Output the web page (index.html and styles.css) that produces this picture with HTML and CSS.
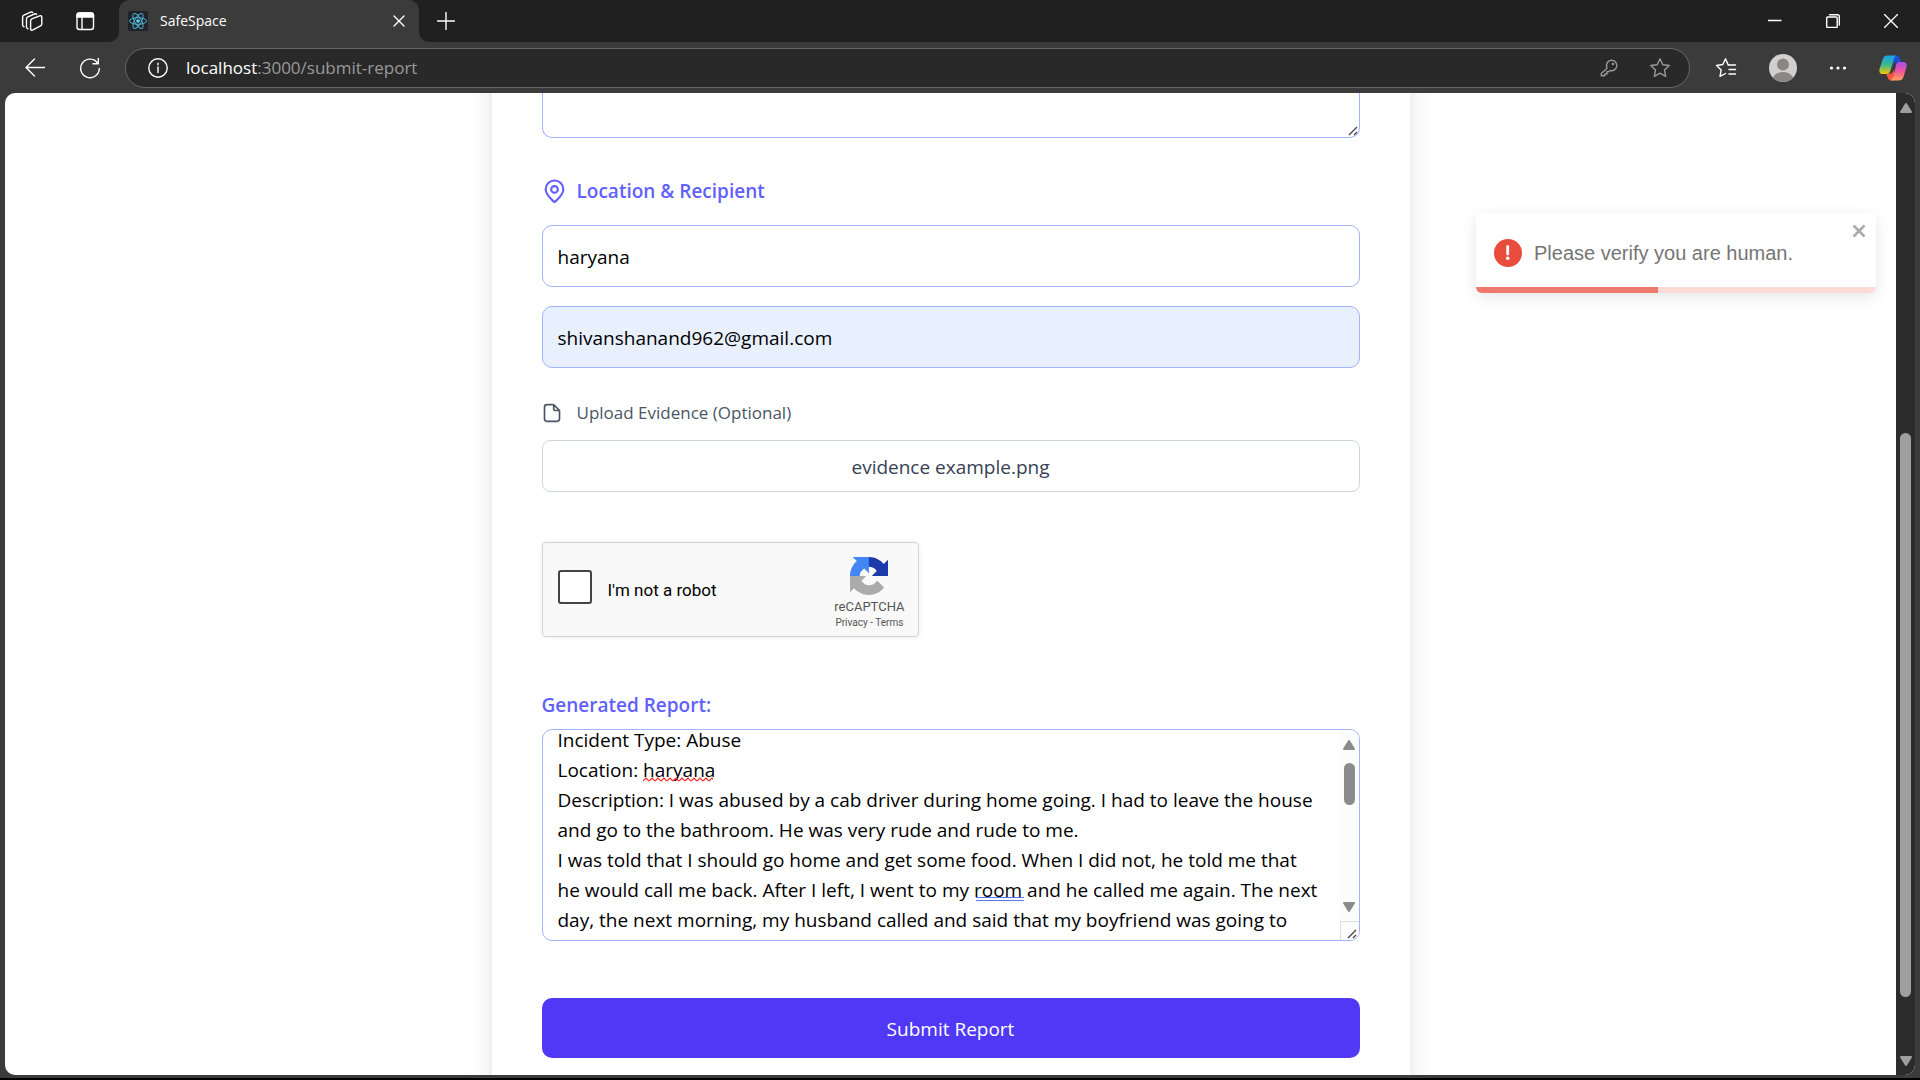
FILE: index.html
```html
<!DOCTYPE html>
<html lang="en">
<head>
<meta charset="utf-8">
<title>SafeSpace</title>
<link rel="stylesheet" href="styles.css">
</head>
<body>
<header class="browser">
  <div class="tabstrip">
    <div class="tab-tools">
      <button class="icon-btn" aria-label="Workspaces"><svg width="22" height="22" viewBox="0 0 22 22" class="line"><path d="M1.600 15.500 V7.200 Q1.600 5.800 3 5.200 L9.500 2.200 Q11 1.700 11.600 2.500 M5.500 17.500 V8.800 Q5.500 7.400 6.900 6.800 L13.500 4 Q15 3.500 15.600 4.500 M1.600 15.500 Q2 16.400 3 16.800 M5.500 17.500 Q6 18.500 7 18.900 M9.600 10.800 Q9.600 9.500 10.900 8.900 L18.600 5.900 Q20.800 5.200 20.800 7.200 V13.700 Q20.800 15.200 19.500 15.900 L12 19.900 Q9.600 20.900 9.600 18.500 Z"/></svg></button>
      <button class="icon-btn" aria-label="Tab actions"><svg width="20" height="20" viewBox="0 0 20 20" class="line"><rect x="2" y="2" width="16.500" height="16.500" rx="2.500"/><path d="M7 6V18"/><path d="M2 6V4.500Q2 2 4.500 2H16Q18.500 2 18.500 4.500V6Z" fill="#fff"/></svg></button>
    </div>
    <div class="tab">
      <svg width="20" height="20" viewBox="0 0 20 20"><rect width="20" height="20" rx="2" fill="#20232a"/><g fill="none" stroke="#4fb3cf" stroke-width="1"><ellipse cx="10" cy="10" rx="8.500" ry="3.300"/><ellipse cx="10" cy="10" rx="8.500" ry="3.300" transform="rotate(60 10 10)"/><ellipse cx="10" cy="10" rx="8.500" ry="3.300" transform="rotate(120 10 10)"/></g><circle cx="10" cy="10" r="1.800" fill="#61dafb"/></svg>
      <span class="tab-title">SafeSpace</span>
      <button class="icon-btn" aria-label="Close tab"><svg width="12" height="12" viewBox="0 0 12 12" class="line"><path d="M1 1 11 11M11 1 1 11"/></svg></button>
    </div>
    <button class="icon-btn new-tab" aria-label="New tab"><svg width="18" height="18" viewBox="0 0 18 18" class="line"><path d="M9 .5V17.500M.5 9H17.500"/></svg></button>
    <div class="window-controls">
      <button class="icon-btn" aria-label="Minimize"><svg width="14" height="14" viewBox="0 0 14 14" class="line"><path d="M0 6.500H13"/></svg></button>
      <button class="icon-btn" aria-label="Restore"><svg width="14" height="14" viewBox="0 0 14 14" class="line"><rect x=".7" y="3" width="10.500" height="10.500" rx="1"/><path d="M3.500.8H11.500Q13.300.8 13.300 2.600V11"/></svg></button>
      <button class="icon-btn" aria-label="Close"><svg width="14" height="14" viewBox="0 0 14 14" class="line"><path d="M.5.5 13.500 13.500M13.500.5.5 13.500"/></svg></button>
    </div>
  </div>
  <div class="toolbar">
    <button class="icon-btn" aria-label="Back"><svg width="20" height="20" viewBox="0 0 20 20" class="line"><path d="M20 9.500H1M9.500 1 1 9.500 9.500 18"/></svg></button>
    <button class="icon-btn reload" aria-label="Reload"><svg width="22" height="22" viewBox="0 0 22 22" class="line"><path d="M18.900 6.500A9.300 9.300 0 1 0 20.300 11.500M19.300 1.500V6.800H14"/></svg></button>
    <div class="address">
      <svg width="20" height="20" viewBox="0 0 20 20" class="line"><circle cx="10" cy="10" r="9.200"/><path d="M10 9V14.500M10 5.200V6.800"/></svg>
      <p class="url"><span class="host">localhost</span>:3000/submit-report</p>
      <button class="icon-btn muted" aria-label="Saved password"><svg width="18" height="18" viewBox="0 0 18 18" class="line"><path d="M6.900 9.400C5.200 4.600 8.200 1.200 11.500 1.200A5.300 5.300 0 0 1 16.800 6.500C16.800 9.800 13.600 12.500 10.200 11.500L8.500 12.800H7V15H5L4.500 16.700H1.300V14.500Z"/><circle cx="13" cy="5" r=".6"/></svg></button>
      <button class="icon-btn muted" aria-label="Add favorite"><svg width="22" height="22" viewBox="0 0 22 22" class="line"><path d="M11 1.800 13.800 7.700 20.200 8.500 15.500 12.900 16.700 19.300 11 16.200 5.300 19.300 6.500 12.900 1.800 8.500 8.200 7.700Z"/></svg></button>
    </div>
    <button class="icon-btn" aria-label="Favorites"><svg width="22" height="22" viewBox="0 0 22 22" class="line"><path d="M14 7.700 13 7.500 10.500 1.800 7.800 7.500 1.500 8.500 6.200 12.900 5 19.300 10.500 16.500M13 8H20.500M14 12.500H20.500M14 17H20.500"/></svg></button>
    <button class="icon-btn" aria-label="Profile"><svg width="28" height="28" viewBox="0 0 28 28"><defs><clipPath id="face"><circle cx="14" cy="14" r="14"/></clipPath></defs><g clip-path="url(#face)"><rect width="28" height="28" fill="#d2d0ce"/><circle cx="14" cy="10.500" r="6" fill="#8a8886"/><ellipse cx="14" cy="26" rx="10.500" ry="8" fill="#8a8886"/></g></svg></button>
    <button class="icon-btn" aria-label="Settings and more"><svg width="18" height="18" viewBox="0 0 18 18" fill="#fff"><circle cx="2.500" cy="9" r="1.600"/><circle cx="9" cy="9" r="1.600"/><circle cx="15.500" cy="9" r="1.600"/></svg></button>
    <button class="icon-btn" aria-label="Copilot"><svg width="28" height="26" viewBox="0 0 28 26"><defs><linearGradient id="c1" x1="0" y1="0" x2="0" y2="1"><stop offset="0" stop-color="#18a0f0"/><stop offset=".5" stop-color="#3cb98a"/><stop offset="1" stop-color="#f6c800"/></linearGradient><linearGradient id="c2" x1="0" y1="0" x2="0" y2="1"><stop offset="0" stop-color="#a94df0"/><stop offset=".5" stop-color="#f0559a"/><stop offset="1" stop-color="#ffa45c"/></linearGradient></defs><path d="M14 .5H17.500Q20 .5 20.700 3L22 7H18Q15 7 14 10L12 15Z" fill="#1b4fd8"/><path d="M7 18.500H13L15 10V19L14 25.500H12Q9.500 25.500 8.500 22Z" fill="#f4573b"/><path d="M8.500.5H18Q15.500 1 14.500 5L11.500 15.500Q10.500 19 7 19H4Q-.5 19 .5 14L4 3.500Q5 .5 8.500 .5Z" fill="url(#c1)"/><path d="M20 7H24Q28.500 7 27.500 12L24.500 22Q23.300 25.500 19.500 25.500H11.500Q13.500 24.500 14.500 21L17 10Q17.500 7 20 7Z" fill="url(#c2)"/><path d="M14.800 8.500H17L14 17H12Z" fill="#3b3b3b"/></svg></button>
  </div>
</header>

<div class="viewport">
  <main class="page">
    <form class="card">
      <div class="description">
        <textarea class="field description-box" aria-label="Description"></textarea>
        <svg class="grip" width="10" height="10" viewBox="0 0 10 10"><path d="M1 9 9 1M6 9 9 6" stroke="#444" stroke-width="1.300"/></svg>
      </div>

      <section class="location">
        <h2 class="heading"><svg width="25" height="25" viewBox="0 0 24 24" fill="none" stroke="currentColor" stroke-width="2"><path d="M20.500 9.800C20.500 15 14.500 20 12.600 21.800Q12 22.300 11.400 21.800C9.500 20 3.500 15 3.500 9.800A8.500 8.300 0 0 1 20.500 9.800Z"/><circle cx="12" cy="10" r="3.200"/></svg>Location &amp; Recipient</h2>
        <input class="field" type="text" aria-label="Location" value="haryana">
        <input class="field autofilled" type="email" aria-label="Recipient email" value="shivanshanand962@gmail.com">
      </section>

      <section class="evidence">
        <label class="evidence-label" for="evidence"><svg width="20" height="20" viewBox="0 0 24 24" fill="none" stroke="currentColor" stroke-width="2" stroke-linejoin="round"><path d="M13 2H6A3 3 0 0 0 3 5V19A3 3 0 0 0 6 22H18A3 3 0 0 0 21 19V9L14 2V6.500Q14 9 16.500 9H21"/></svg>Upload Evidence (Optional)</label>
        <label class="file-drop"><input class="file-input" id="evidence" type="file">evidence example.png</label>
      </section>

      <div class="captcha">
        <input class="captcha-box" type="checkbox" id="robot">
        <label class="captcha-label" for="robot">I'm not a robot</label>
        <div class="captcha-brand">
          <svg width="38" height="38" viewBox="0 0 64 64"><path d="M64 31.955l-.033-1.370V4.687l-7.160 7.160C50.948 4.674 42.033.093 32.050.093c-10.400 0-19.622 4.960-25.458 12.640l11.736 11.860a15.550 15.550 0 0 1 4.754-5.334c2.050-1.600 4.952-2.906 8.968-2.906.485 0 .86.057 1.135.163 4.976.393 9.288 3.140 11.828 7.124l-8.307 8.307L64 31.953" fill="#1c3aa9"/><path d="M31.862.094l-1.370.033H4.594l7.160 7.160C4.580 13.147 0 22.060 0 32.046c0 10.400 4.960 19.622 12.640 25.458L24.500 45.768a15.550 15.550 0 0 1-5.334-4.754c-1.600-2.050-2.906-4.952-2.906-8.968 0-.485.057-.86.163-1.135.393-4.976 3.140-9.288 7.124-11.828l8.307 8.307L31.860.095" fill="#4285f4"/><path d="M.001 32.045l.033 1.370v25.898l7.160-7.160c5.860 7.173 14.774 11.754 24.760 11.754 10.400 0 19.622-4.960 25.458-12.640L45.676 39.407a15.550 15.550 0 0 1-4.754 5.334c-2.050 1.600-4.952 2.906-8.968 2.906-.485 0-.86-.057-1.135-.163-4.976-.393-9.288-3.140-11.828-7.124l8.307-8.307c-10.522.04-22.400.066-27.295-.005" fill="#ababab"/></svg>
          <span class="captcha-name">reCAPTCHA</span>
          <span class="captcha-links"><a href="#privacy">Privacy</a> - <a href="#terms">Terms</a></span>
        </div>
      </div>

      <section class="report">
        <label class="heading" for="report">Generated Report:</label>
        <div class="report-box">
          <textarea class="report-text" id="report" rows="7" spellcheck="false">Incident Type: Abuse
Location: haryana
Description: I was abused by a cab driver during home going. I had to leave the house
and go to the bathroom. He was very rude and rude to me.
I was told that I should go home and get some food. When I did not, he told me that
he would call me back. After I left, I went to my room and he called me again. The next
day, the next morning, my husband called and said that my boyfriend was going to</textarea>
          <svg class="mark mark-spelling" width="70" height="5"><defs><pattern id="wave" width="6" height="5" patternUnits="userSpaceOnUse"><path d="M0 4 3 1 6 4" fill="none" stroke="#f22" stroke-width="1.200"/></pattern></defs><rect width="70" height="5" fill="url(#wave)"/></svg>
          <span class="mark mark-grammar"></span>
          <div class="scroll report-scroll">
            <div class="scroll-track">
              <svg width="12" height="10" viewBox="0 0 12 10"><path d="M6 1 11 9H1Z"/></svg>
              <div class="gap-13"></div><div class="thumb-42"></div><div class="gap-97"></div>
              <svg width="12" height="10" viewBox="0 0 12 10"><path d="M6 9 11 1H1Z"/></svg>
            </div>
            <div class="corner"><svg width="10" height="10" viewBox="0 0 10 10"><path d="M1 9 9 1M6 9 9 6" stroke="#444" stroke-width="1.300"/></svg></div>
          </div>
        </div>
      </section>

      <button class="submit" type="button">Submit Report</button>
    </form>

    <div class="toast" role="alert">
      <div class="toast-body">
        <svg width="28" height="28" viewBox="0 0 28 28"><circle cx="14" cy="14" r="14" fill="#e74c3c"/><path d="M13.700 7.500V15" stroke="#fff" stroke-width="2.800" stroke-linecap="round"/><circle cx="13.700" cy="19.300" r="1.800" fill="#fff"/></svg>
        <span class="toast-text">Please verify you are human.</span>
      </div>
      <button class="icon-btn toast-close" type="button" aria-label="Dismiss"><svg width="14" height="14" viewBox="0 0 14 14"><path d="M1.500 1.500 12.500 12.500M12.500 1.500 1.500 12.500" stroke="#aaa" stroke-width="2.500"/></svg></button>
      <div class="toast-progress"><div class="toast-bar" style="width:45.5%"></div></div>
    </div>
  </main>
  <div class="scroll page-scroll">
    <div class="scroll-track">
      <svg width="12" height="10" viewBox="0 0 12 10"><path d="M6 1 11 9H1Z"/></svg>
      <div class="gap-320"></div><div class="thumb-564"></div><div class="gap-59"></div>
      <svg width="12" height="10" viewBox="0 0 12 10"><path d="M6 9 11 1H1Z"/></svg>
    </div>
  </div>
</div>
</body>
</html>
```
FILE: styles.css
```css
* { box-sizing: border-box; }
body {
  margin: 0;
  height: 100vh;
  display: flex;
  flex-direction: column;
  overflow: hidden;
  padding-bottom: 3px;
  border-bottom: 2px solid #000;
  background: #3b3b3b;
  color: #000;
  font-family: "Open Sans", "Noto Sans", sans-serif;
  font-size: 19px;
  line-height: 30px;
}
svg { display: block; flex: none; }
button, input, textarea { font: inherit; color: inherit; }
.line { fill: none; stroke: currentColor; stroke-width: 1.4; stroke-linecap: round; stroke-linejoin: round; }
.icon-btn { flex: none; padding: 0; border: 0; background: none; color: #fff; }
.muted { color: #999; }

/* Browser chrome */
.browser { flex: none; color: #fff; }
.tabstrip { display: flex; align-items: stretch; height: 42px; background: linear-gradient(to right, #3b3b3b 440px, #202020 440px); }
.tab-tools { display: flex; align-items: center; gap: 32px; width: 119px; padding-left: 21px; border-bottom-right-radius: 10px; background: #202020; }
.tab { display: flex; align-items: center; gap: 12px; width: 300px; padding: 0 14px 0 9px; border-radius: 10px 10px 0 0; background: #3b3b3b; box-shadow: 0 -10px 0 10px #202020; clip-path: inset(0); }
.tab-title { flex: 1; font-size: 14px; }
.new-tab { padding: 0 18px; border-bottom-left-radius: 10px; background: #202020; }
.window-controls { display: flex; align-items: center; gap: 44px; margin-left: auto; padding-right: 22px; }
.toolbar { display: flex; align-items: center; height: 51px; padding: 0 13px 0 25px; gap: 32px; }
.address { flex: 1; display: flex; align-items: center; gap: 31px; height: 40px; margin-right: -7px; padding: 0 18px 0 22px; border: 1px solid #666; border-radius: 20px; background: #292929; }
.reload { margin-left: 2px; }
.reload + .address { margin-left: -8px; }
.url { flex: 1; margin: 0 0 0 -13px; font-size: 17px; color: #999; }
.host { color: #fff; }

/* Page */
.viewport { flex: 1; min-height: 0; display: flex; margin: 0 5px; border-radius: 10px; overflow: hidden; background: #fff; }
.page { position: relative; flex: 1; overflow: hidden; }
.card {
  max-width: 918px;
  margin: -60px auto 0;
  padding: 60px 50px 80px;
  background: #fff;
  box-shadow: 0 0 30px -6px rgba(0, 0, 0, .15), 0 0 12px -7px rgba(0, 0, 0, .1);
}
.field { display: block; width: 100%; height: 62px; padding: 2px 15px 0; border: 1px solid #a3b3ff; border-radius: 10px; background: #fff; outline: 0; }
.autofilled { background: #e8f0fe; }
.description { position: relative; }
.description-box { height: 45px; border-top: 0; border-radius: 0 0 10px 10px; resize: none; }
.grip { position: absolute; right: 2px; bottom: 2px; }
.heading { display: flex; align-items: center; gap: 10px; margin: 0; color: #615fff; font-size: 19px; font-weight: 600; line-height: 30px; }
.location { display: flex; flex-direction: column; gap: 19px; margin-top: 38px; }
.evidence { margin-top: 30px; }
.evidence-label { display: flex; align-items: center; gap: 15px; margin-bottom: 12px; color: #4a5565; font-size: 17px; }
.file-drop { display: flex; align-items: center; justify-content: center; height: 52px; padding-top: 2px; border: 1px solid #d1d5dc; border-radius: 8px; color: #364153; }
.file-input { position: absolute; width: 1px; height: 1px; opacity: 0; }

.captcha { display: flex; align-items: center; width: 377px; height: 95px; margin-top: 50px; padding: 0 13px 0 15px; border: 1px solid #d3d3d3; border-radius: 4px; background: #f9f9f9; box-shadow: 0 0 5px rgba(0, 0, 0, .08); }
.captcha-box { appearance: none; width: 34px; height: 34px; margin: 0 16px 5px 0; border: 2px solid #444; border-radius: 3px; background: #fff; }
.captcha-label { flex: 1; font-family: Roboto, sans-serif; font-size: 17px; }
.captcha-brand { display: flex; flex-direction: column; align-items: center; padding-top: 8px; color: #555; font-family: Roboto, sans-serif; }
.captcha-name { margin-top: 4px; font-size: 13px; line-height: 16px; }
.captcha-links { font-size: 10px; line-height: 16px; }
.captcha-links a { color: inherit; text-decoration: none; }

.report { margin-top: 53px; }
.report-box { position: relative; display: flex; height: 212px; margin-top: 9px; border: 1px solid #a3b3ff; border-radius: 10px; overflow: hidden; }
.report-text { flex: 1; margin-top: -5px; padding: 0 0 0 15px; border: 0; outline: 0; resize: none; overflow: hidden; white-space: pre; background: none; }
.mark { position: absolute; }
.mark-spelling { left: 100px; top: 47px; }
.mark-grammar { left: 433px; top: 167px; width: 48px; height: 4px; border: 1px solid #5b76f5; border-width: 1px 0; }
.report-scroll { background: #fcfcfc; color: #8b8b8b; }
.corner { display: flex; align-items: flex-end; justify-content: flex-end; height: 19px; padding: 0 2px 1px 0; border: 1px solid #ddd; border-width: 1px 0 0 1px; }

.submit { display: block; width: 100%; height: 60px; margin-top: 57px; padding: 2px 0 0; border: 0; border-radius: 10px; background: #4f39f6; color: #fff; }

/* Scroll bars */
.scroll { display: flex; flex-direction: column; flex: none; width: 19px; }
.scroll-track { flex: 1; display: flex; flex-direction: column; align-items: center; padding: 10px 0 9px; }
.scroll-track svg { fill: currentColor; stroke: currentColor; stroke-width: 2; stroke-linejoin: round; }
.page-scroll { background: #2c2c2c; color: #9f9f9f; }
.gap-13 { flex: 13; }
.gap-97 { flex: 97; }
.gap-59 { flex: 59; }
.gap-320 { flex: 320; }
.thumb-42, .thumb-564 { width: 11px; border-radius: 6px; background: currentColor; }
.thumb-42 { flex: 42; }
.thumb-564 { flex: 564; }

/* Toast */
.toast { position: absolute; top: 120px; right: 20px; width: 400px; height: 80px; display: flex; flex-direction: column; border-radius: 6px; overflow: hidden; background: #fff; box-shadow: 0 4px 15px rgba(0, 0, 0, .1); }
.toast-body { flex: 1; display: flex; align-items: center; gap: 12px; padding: 5px 18px 0; }
.toast-text { color: #757575; font-family: "Liberation Sans", Arial, sans-serif; font-size: 20px; }
.toast-close { position: absolute; top: 11px; right: 10px; }
.toast-progress { height: 6px; background: #fadbd8; }
.toast-bar { height: 6px; background: #ee786c; }
```
